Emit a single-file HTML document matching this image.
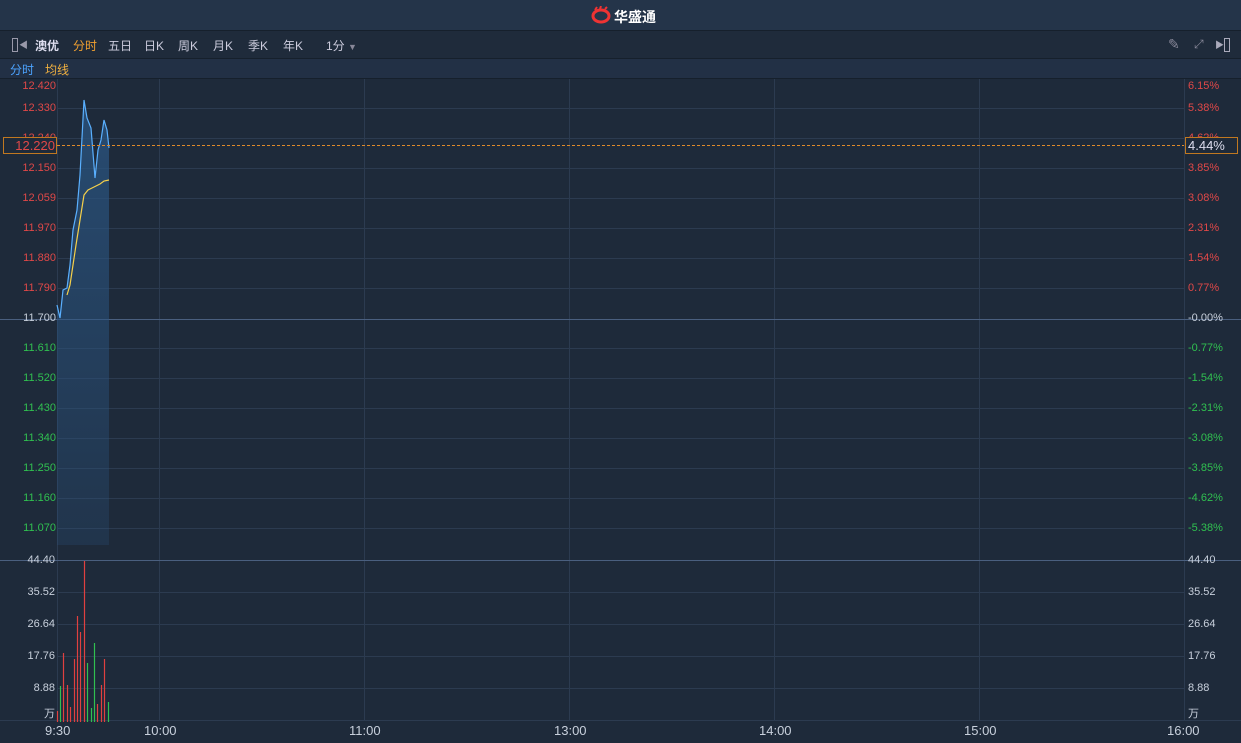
<!DOCTYPE html><html><head><meta charset="utf-8"><style>
body{margin:0;width:1241px;height:743px;background:#1e2a3a;font-family:"Liberation Sans","Noto Sans CJK SC",sans-serif;overflow:hidden;position:relative}
.t{position:absolute;font-size:11px;white-space:nowrap}
</style></head><body>
<div style="position:absolute;left:0;top:0;width:1241px;height:30px;background:#243449;border-bottom:1px solid #16202c"></div>
<svg style="position:absolute;left:591px;top:6px" width="22" height="18" viewBox="0 0 22 18"><ellipse cx="10" cy="10" rx="8" ry="6" fill="none" stroke="#e33" stroke-width="3"/><path d="M4 4 L6 1 M9 3 L10 0 M14 3 L16 1" stroke="#e33" stroke-width="2"/></svg>
<div class="t" style="left:614px;top:7px;font-size:14px;font-weight:bold;color:#fff">华盛通</div>
<div style="position:absolute;left:0;top:31px;width:1241px;height:27px;background:#1f2b3b;border-bottom:1px solid #16202c"></div>
<div style="position:absolute;left:12px;top:38px;width:4px;height:12px;border:1px solid #99a;"></div>
<div class="t" style="left:19px;top:38px;font-size:9px;color:#99a">◀</div>
<div class="t" style="left:35px;top:37px;font-size:12px;color:#dde;font-weight:bold">澳优</div>
<div class="t" style="left:73px;top:37px;font-size:12px;color:#f0a030">分时</div>
<div class="t" style="left:108px;top:37px;font-size:12px;color:#ccd">五日</div>
<div class="t" style="left:144px;top:37px;font-size:12px;color:#ccd">日K</div>
<div class="t" style="left:178px;top:37px;font-size:12px;color:#ccd">周K</div>
<div class="t" style="left:213px;top:37px;font-size:12px;color:#ccd">月K</div>
<div class="t" style="left:248px;top:37px;font-size:12px;color:#ccd">季K</div>
<div class="t" style="left:283px;top:37px;font-size:12px;color:#ccd">年K</div>
<div class="t" style="left:326px;top:37px;font-size:12px;color:#ccd">1分 <span style="color:#889;font-size:9px">▼</span></div>
<div class="t" style="left:1168px;top:36px;font-size:14px;color:#889">✎</div>
<div class="t" style="left:1194px;top:37px;font-size:12px;color:#889">⤢</div>
<div class="t" style="left:1215px;top:38px;font-size:9px;color:#aab">▶</div>
<div style="position:absolute;left:1224px;top:38px;width:4px;height:12px;border:1px solid #aab;"></div>
<div style="position:absolute;left:0;top:59px;width:1241px;height:19px;background:#223045;border-bottom:1px solid #16202c"></div>
<div class="t" style="left:10px;top:61px;font-size:12px;color:#4ca3ff">分时</div>
<div class="t" style="left:45px;top:61px;font-size:12px;color:#f0b040">均线</div>
<svg style="position:absolute;left:0;top:0" width="1241" height="743">
<defs><linearGradient id="g" x1="0" y1="0" x2="0" y2="1"><stop offset="0" stop-color="#2a5480" stop-opacity="0.8"/><stop offset="1" stop-color="#2a5480" stop-opacity="0.25"/></linearGradient></defs>
<g stroke="#2c3b50" stroke-width="1">
<line x1="57.5" y1="79" x2="57.5" y2="720"/><line x1="1184.5" y1="79" x2="1184.5" y2="720"/>
<line x1="159.5" y1="79" x2="159.5" y2="720"/><line x1="364.5" y1="79" x2="364.5" y2="720"/><line x1="569.5" y1="79" x2="569.5" y2="720"/><line x1="774.5" y1="79" x2="774.5" y2="720"/><line x1="979.5" y1="79" x2="979.5" y2="720"/>
<line x1="57" y1="108.5" x2="1184" y2="108.5"/><line x1="57" y1="138.5" x2="1184" y2="138.5"/><line x1="57" y1="168.5" x2="1184" y2="168.5"/><line x1="57" y1="198.5" x2="1184" y2="198.5"/><line x1="57" y1="228.5" x2="1184" y2="228.5"/><line x1="57" y1="258.5" x2="1184" y2="258.5"/><line x1="57" y1="288.5" x2="1184" y2="288.5"/>
<line x1="57" y1="348.5" x2="1184" y2="348.5"/><line x1="57" y1="378.5" x2="1184" y2="378.5"/><line x1="57" y1="408.5" x2="1184" y2="408.5"/><line x1="57" y1="438.5" x2="1184" y2="438.5"/><line x1="57" y1="468.5" x2="1184" y2="468.5"/><line x1="57" y1="498.5" x2="1184" y2="498.5"/><line x1="57" y1="528.5" x2="1184" y2="528.5"/>
<line x1="57" y1="592.5" x2="1184" y2="592.5"/><line x1="57" y1="624.5" x2="1184" y2="624.5"/><line x1="57" y1="656.5" x2="1184" y2="656.5"/><line x1="57" y1="688.5" x2="1184" y2="688.5"/>
<line x1="0" y1="720.5" x2="1241" y2="720.5"/>
</g>
<line x1="0" y1="319.5" x2="1241" y2="319.5" stroke="#4a5f7f"/>
<line x1="0" y1="560.5" x2="1241" y2="560.5" stroke="#4a5f7f"/>
<polygon points="57,305 60,318 63,290 67,288 70,265 73,230 77,210 80,175 84,100 87,118 91,128 95,178 98,150 101,140 104,120 107,130 109,148 109,545 57,545" fill="url(#g)"/>
<polyline points="57,305 60,318 63,290 67,288 70,265 73,230 77,210 80,175 84,100 87,118 91,128 95,178 98,150 101,140 104,120 107,130 109,148" fill="none" stroke="#5ab0ff" stroke-width="1.2"/>
<polyline points="67,295 70,285 73,265 76,245 80,220 84,195 88,190 92,188 96,186 100,184 104,181 109,180" fill="none" stroke="#f5d04a" stroke-width="1.2"/>
<line x1="57" y1="145.5" x2="1184" y2="145.5" stroke="#e08a2a" stroke-width="1" stroke-dasharray="3,2"/>
<g stroke-width="1.2">
<line x1="57.5" y1="722" x2="57.5" y2="711" stroke="#e04040"/>
<line x1="60.5" y1="722" x2="60.5" y2="686" stroke="#30c050"/>
<line x1="63.5" y1="722" x2="63.5" y2="653" stroke="#e04040"/>
<line x1="67.5" y1="722" x2="67.5" y2="685" stroke="#e04040"/>
<line x1="70.5" y1="722" x2="70.5" y2="707" stroke="#e04040"/>
<line x1="74.5" y1="722" x2="74.5" y2="659" stroke="#e04040"/>
<line x1="77.5" y1="722" x2="77.5" y2="616" stroke="#e04040"/>
<line x1="80.5" y1="722" x2="80.5" y2="632" stroke="#e04040"/>
<line x1="84.5" y1="722" x2="84.5" y2="561" stroke="#e04040"/>
<line x1="87.5" y1="722" x2="87.5" y2="663" stroke="#30c050"/>
<line x1="91.5" y1="722" x2="91.5" y2="708" stroke="#30c050"/>
<line x1="94.5" y1="722" x2="94.5" y2="643" stroke="#30c050"/>
<line x1="97.5" y1="722" x2="97.5" y2="704" stroke="#e04040"/>
<line x1="101.5" y1="722" x2="101.5" y2="685" stroke="#e04040"/>
<line x1="104.5" y1="722" x2="104.5" y2="659" stroke="#e04040"/>
<line x1="108.5" y1="722" x2="108.5" y2="702" stroke="#30c050"/>
</g>
</svg>
<div style="font-size:11px;color:#e04848">
<div class="t" style="right:1185px;top:80px">12.420</div><div class="t" style="right:1185px;top:102px">12.330</div><div class="t" style="right:1185px;top:132px">12.240</div><div class="t" style="right:1185px;top:162px">12.150</div><div class="t" style="right:1185px;top:192px">12.059</div><div class="t" style="right:1185px;top:222px">11.970</div><div class="t" style="right:1185px;top:252px">11.880</div><div class="t" style="right:1185px;top:282px">11.790</div>
<div class="t" style="left:1188px;top:80px">6.15%</div><div class="t" style="left:1188px;top:102px">5.38%</div><div class="t" style="left:1188px;top:132px">4.62%</div><div class="t" style="left:1188px;top:162px">3.85%</div><div class="t" style="left:1188px;top:192px">3.08%</div><div class="t" style="left:1188px;top:222px">2.31%</div><div class="t" style="left:1188px;top:252px">1.54%</div><div class="t" style="left:1188px;top:282px">0.77%</div>
</div>
<div class="t" style="right:1185px;top:312px;color:#c8d0dc">11.700</div><div class="t" style="left:1188px;top:312px;color:#c8d0dc">-0.00%</div>
<div style="color:#30c050">
<div class="t" style="right:1185px;top:342px">11.610</div><div class="t" style="right:1185px;top:372px">11.520</div><div class="t" style="right:1185px;top:402px">11.430</div><div class="t" style="right:1185px;top:432px">11.340</div><div class="t" style="right:1185px;top:462px">11.250</div><div class="t" style="right:1185px;top:492px">11.160</div><div class="t" style="right:1185px;top:522px">11.070</div>
<div class="t" style="left:1188px;top:342px">-0.77%</div><div class="t" style="left:1188px;top:372px">-1.54%</div><div class="t" style="left:1188px;top:402px">-2.31%</div><div class="t" style="left:1188px;top:432px">-3.08%</div><div class="t" style="left:1188px;top:462px">-3.85%</div><div class="t" style="left:1188px;top:492px">-4.62%</div><div class="t" style="left:1188px;top:522px">-5.38%</div>
</div>
<div style="position:absolute;left:3px;top:137px;width:52px;height:15px;background:#1e2a3a;border:1px solid #c07820"></div>
<div style="position:absolute;left:1185px;top:137px;width:51px;height:15px;background:#1e2a3a;border:1px solid #c07820"></div>
<div class="t" style="right:1186px;top:138px;font-size:13px;color:#e04848">12.220</div>
<div class="t" style="left:1188px;top:138px;font-size:13px;color:#dde">4.44%</div>
<div style="color:#c8d0dc">
<div class="t" style="right:1186px;top:554px">44.40</div><div class="t" style="right:1186px;top:586px">35.52</div><div class="t" style="right:1186px;top:618px">26.64</div><div class="t" style="right:1186px;top:650px">17.76</div><div class="t" style="right:1186px;top:682px">8.88</div><div class="t" style="right:1186px;top:705px">万</div>
<div class="t" style="left:1188px;top:554px">44.40</div><div class="t" style="left:1188px;top:586px">35.52</div><div class="t" style="left:1188px;top:618px">26.64</div><div class="t" style="left:1188px;top:650px">17.76</div><div class="t" style="left:1188px;top:682px">8.88</div><div class="t" style="left:1188px;top:705px">万</div>
</div>
<div style="color:#c8d0dc;font-size:13px">
<div class="t" style="left:45px;top:723px;font-size:13px">9:30</div><div class="t" style="left:144px;top:723px;font-size:13px">10:00</div><div class="t" style="left:349px;top:723px;font-size:13px">11:00</div><div class="t" style="left:554px;top:723px;font-size:13px">13:00</div><div class="t" style="left:759px;top:723px;font-size:13px">14:00</div><div class="t" style="left:964px;top:723px;font-size:13px">15:00</div><div class="t" style="left:1167px;top:723px;font-size:13px">16:00</div>
</div>
</body></html>
